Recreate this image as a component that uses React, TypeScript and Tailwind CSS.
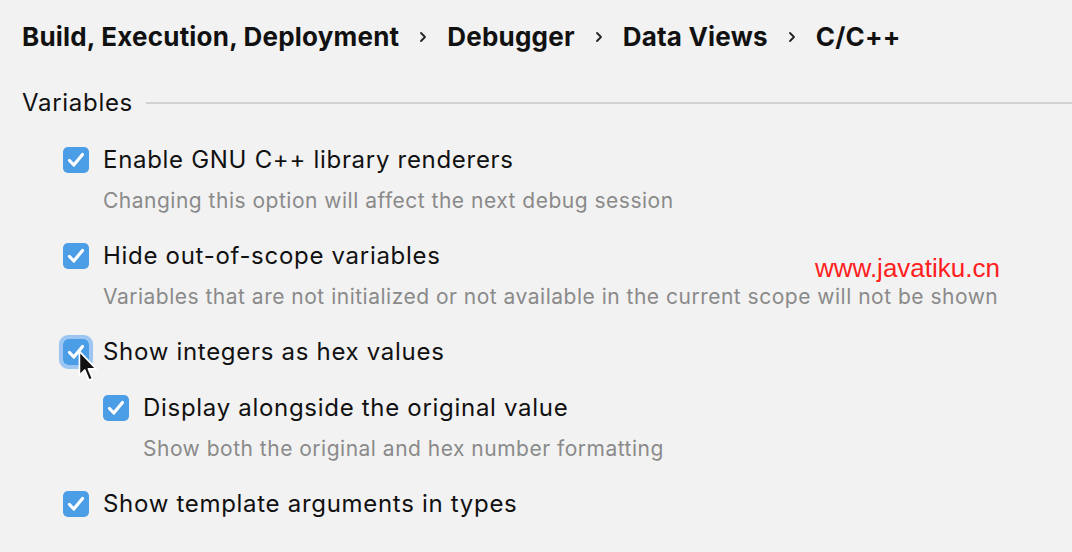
import React from "react"

function Check({ focused }: { focused?: boolean }) {
  return (
    <span
      className={
        "relative flex h-[26px] w-[26px] shrink-0 items-center justify-center rounded-[5px] bg-[#4b9de6] " +
        (focused ? "outline-[4px] outline-solid outline-[#9cc6f1]" : "")
      }
    >
      <svg width="26" height="26" viewBox="0 0 26 26" fill="none">
        <path d="M6.5 13.5 L10.8 18 L19.5 7.5" stroke="white" strokeWidth="3.2" strokeLinecap="round" strokeLinejoin="round" />
      </svg>
      {focused && (
        <svg className="absolute left-[14px] top-[11px]" width="24" height="34" viewBox="0 0 20 28">
          <path d="M2 1 L2 21 L6.5 16.5 L10 25 L13 23.7 L9.5 15.5 L16 15.5 Z" fill="#111" stroke="white" strokeWidth="1.4" strokeLinejoin="round" />
        </svg>
      )}
    </span>
  )
}

function Option({ label, desc, focused }: { label: string; desc?: string; focused?: boolean }) {
  return (
    <div>
      <div className="flex h-[30px] items-center gap-[14px]">
        <Check focused={focused} />
        <span className="text-[24px] leading-[30px] tracking-[0.7px] text-[#111]">{label}</span>
      </div>
      {desc && (
        <div className="mt-[11px] pl-[40px] text-[21px] leading-[30px] tracking-[0.5px] text-[#8a8a8a]">{desc}</div>
      )}
    </div>
  )
}

export default function App() {
  const crumbs = ["Build, Execution, Deployment", "Debugger", "Data Views", "C/C++"]

  return (
    <div className="h-[552px] w-[1072px] overflow-hidden bg-[#f2f2f2] font-['Inter',sans-serif]">
      <div className="flex items-center pl-[22px] pt-[21px] text-[26px] font-bold leading-[32px] tracking-[0.2px] text-[#111]">
        {crumbs.map((c, i) => (
          <React.Fragment key={c}>
            {i > 0 && (
              <svg className="mx-[20px]" width="8" height="12" viewBox="0 0 8 12" fill="none">
                <path d="M2 2 L6 6 L2 10" stroke="#222" strokeWidth="1.8" strokeLinecap="round" strokeLinejoin="round" />
              </svg>
            )}
            <span>{c}</span>
          </React.Fragment>
        ))}
      </div>

      <div className="mt-[35px] flex h-[30px] items-center pl-[22px]">
        <span className="text-[24px] leading-[30px] tracking-[0.7px] text-[#111]">Variables</span>
        <div className="ml-[13px] h-[2px] flex-1 bg-[#d2d2d2]" />
      </div>

      <div className="relative mt-[27px] flex flex-col gap-[25px] pl-[63px]">
        <Option label="Enable GNU C++ library renderers" desc="Changing this option will affect the next debug session" />
        <Option
          label="Hide out-of-scope variables"
          desc="Variables that are not initialized or not available in the current scope will not be shown"
        />
        <div className="flex flex-col gap-[26px]">
          <Option label="Show integers as hex values" focused />
          <div className="pl-[40px]">
            <Option label="Display alongside the original value" desc="Show both the original and hex number formatting" />
          </div>
        </div>
        <Option label="Show template arguments in types" />
        <span className="absolute left-[815px] top-[108px] font-['Liberation_Sans',sans-serif] text-[26px] leading-[30px] text-[#ff2020]">
          www.javatiku.cn
        </span>
      </div>
    </div>
  )
}
